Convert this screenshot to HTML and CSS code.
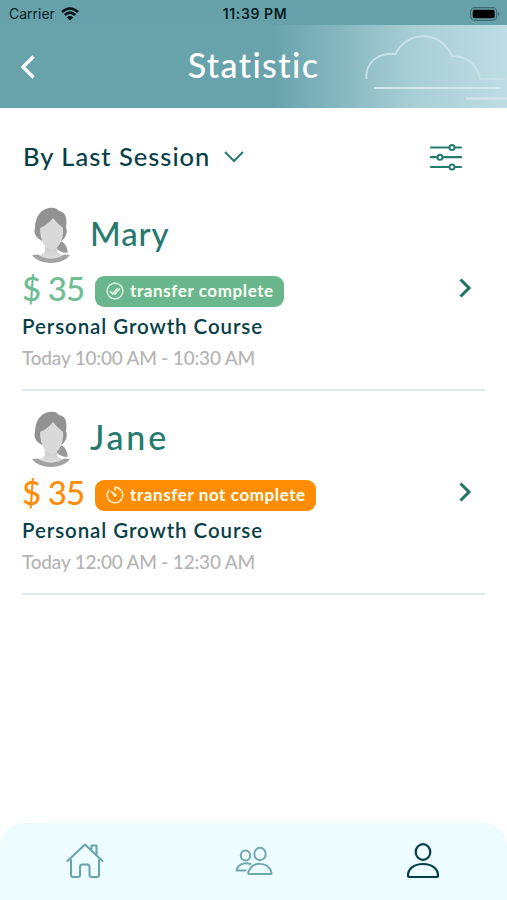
FILE: index.html
```html
<!DOCTYPE html>
<html lang="en">
<head>
<meta charset="utf-8">
<title>Statistic</title>
<link rel="stylesheet" href="styles.css">
</head>
<body>
<svg width="0" height="0" class="defs" aria-hidden="true">
  <defs>
    <linearGradient id="neck" x1="0" y1="0" x2="0" y2="1"><stop offset=".3" stop-color="#cdcdcd"/><stop offset="1" stop-color="#e0e0e0"/></linearGradient>
    <symbol id="avatar" viewBox="0 0 58 58">
      <path fill="#999" d="M37 34C42 34 46 40 45.500 46C40 46 34 43 34 39Z"/>
      <path fill="url(#neck)" d="M23 34H35V44C36 47 41 48 44 50C37 55 20 55 13 50C17 48 22 48 23 44Z"/>
      <path fill="#929292" d="M20 34C15 31 11 27 13 21C13 10 19 2 27 1C31 0 35 1 37 4C45 5 45 14 44 20C46 25 44 31 39 34L30 28Z"/>
      <path fill="#d9d9d9" d="M18 21C23 19 28 15 31 11C34 15 38 18 41 21C42 33 36 43 29.500 43C23 43 18 33 18 21Z"/>
      <path fill="#a3a3a3" d="M10 48L16 47.500C22 53 36 53 42 47.500L48 48C41 58.500 17 58.500 10 48Z"/>
    </symbol>
    <symbol id="next" viewBox="0 0 14 22"><path d="M2.500 2.500L11 11L2.500 19.500" fill="none" stroke="#247466" stroke-width="3"/></symbol>
  </defs>
</svg>
<div class="screen">
  <div class="status">
    <div class="carrier"><span>Carrier</span>
      <svg width="18" height="14" viewBox="0 0 18 14" fill="none" stroke="#061215" stroke-width="2.6"><path d="M1 5Q9-2 17 5M3.800 8Q9 3.400 14.200 8"/><path d="M9 13.500L5.700 10.200Q9 7.600 12.300 10.200Z" fill="#061215" stroke="none"/></svg>
    </div>
    <div class="clock">11:39 PM</div>
    <div class="battery">
      <svg width="31" height="14" viewBox="0 0 31 14"><rect x=".7" y=".7" width="26" height="12.6" rx="4" fill="none" stroke="#3c6a70" stroke-width="1.2"/><rect x="2.7" y="2.7" width="22" height="8.6" rx="2" fill="#000"/><path d="M28.200 4.800Q31 7 28.200 9.200Z" fill="#3c6a70"/></svg>
    </div>
  </div>
  <header class="header">
    <svg class="back" width="18" height="26" viewBox="0 0 18 26"><path d="M14.500 2.500L4 13L14.500 23.500" fill="none" stroke="#fff" stroke-width="3.4"/></svg>
    <h1 class="title">Statistic</h1>
    <svg class="cloud" width="147" height="82" viewBox="0 0 147 82" fill="none" stroke="#c7e2e7" stroke-width="2"><path d="M6.500 53C5 38 17 26 35.500 28C47 4 81 4 92 30C107 30 118 39 120 53H147"/><path d="M14 62H140M106 72.500H147" stroke="#d2e8ed"/></svg>
  </header>
  <main class="content">
    <div class="toolbar">
      <div class="sort"><span class="sort-text">By Last Session</span>
        <svg width="22" height="14" viewBox="0 0 22 14"><path d="M2 2L11 11L20 2" fill="none" stroke="#277b72" stroke-width="2"/></svg>
      </div>
      <svg class="filter" width="34" height="28" viewBox="0 0 34 28" stroke="#267b71" stroke-width="2.2" stroke-linecap="round"><path d="M2 4.500H32M2 14.200H32M2 24H32"/><g fill="#fff" stroke-width="2"><circle cx="23" cy="4.500" r="2.500"/><circle cx="11" cy="14.200" r="2.500"/><circle cx="23" cy="24" r="2.500"/></g></svg>
    </div>
    <article class="item">
      <div class="details">
        <div class="person"><svg class="avatar"><use href="#avatar"/></svg><h2 class="name mary">Mary</h2></div>
        <div class="payment done"><span class="price">$ 35</span>
          <span class="badge">
            <svg width="18" height="18" viewBox="0 0 18 18" fill="none" stroke="#ebfff4" stroke-width="1.3"><circle cx="9" cy="9" r="7.900"/><path d="M4 9.300L6.500 11.800L11.500 6.500M7.500 11L9 12L14 6.500" stroke-width="1.5"/></svg>
            <span class="badge-text">transfer complete</span>
          </span>
        </div>
        <p class="course">Personal Growth Course</p>
        <p class="time">Today 10:00 AM - 10:30 AM</p>
      </div>
      <svg class="next"><use href="#next"/></svg>
    </article>
    <article class="item">
      <div class="details">
        <div class="person"><svg class="avatar"><use href="#avatar"/></svg><h2 class="name jane">Jane</h2></div>
        <div class="payment pending"><span class="price">$ 35</span>
          <span class="badge">
            <svg width="18" height="18" viewBox="0 0 18 18" fill="none" stroke="#fff4d8" stroke-width="1.4"><path d="M9 5V1.200A7.800 7.800 0 1 1 3.200 3.700"/><path d="M4.800 5L10.500 9L9 10.800Z" fill="#fff4d8" stroke-width="1"/></svg>
            <span class="badge-text">transfer not complete</span>
          </span>
        </div>
        <p class="course">Personal Growth Course</p>
        <p class="time">Today 12:00 AM - 12:30 AM</p>
      </div>
      <svg class="next"><use href="#next"/></svg>
    </article>
  </main>
  <nav class="tabs">
    <div class="tab"><svg width="38" height="38" viewBox="0 0 38 38" fill="none" stroke="#68a4ab" stroke-width="2" stroke-linejoin="round" stroke-linecap="round"><path d="M1.500 19L19 2.500L36.500 19M5 18V33Q5 35 7 35H12Q14 35 14 33V25Q14 22.500 16.500 22.500H21Q23.500 22.500 23.500 25V33Q23.500 35 25.500 35H31Q33 35 33 33V18M25.500 7V3.500H30.500V13"/></svg></div>
    <div class="tab"><svg width="38" height="38" viewBox="0 0 38 38" fill="none" stroke="#70a8af" stroke-width="2" stroke-linejoin="round" stroke-linecap="round"><ellipse cx="10.500" cy="13.500" rx="4.700" ry="5"/><ellipse cx="25" cy="12" rx="5.700" ry="6.200"/><path d="M15.500 22C8.500 20 2.500 23 1.500 28.500H10.500M14 32C12.500 31.500 13.500 29 15 27C19 20 31.500 20 35.500 28C36.500 31 37.500 32 35.500 32Z"/></svg></div>
    <div class="tab"><svg width="38" height="38" viewBox="0 0 38 38" fill="none" stroke="#073f49" stroke-width="2.200" stroke-linejoin="round"><ellipse cx="19" cy="10" rx="7.300" ry="7.800"/><path d="M4 33.500C4 27 9.500 22 19 22S34 27 34 33.500Q34 35 32 35H6Q4 35 4 33.500Z"/></svg></div>
  </nav>
</div>
</body>
</html>
```

FILE: styles.css
```css
* { box-sizing: border-box; }
body { margin: 0; background: #fff; font-family: Lato, "Open Sans", sans-serif; }
h1, h2, p { margin: 0; white-space: nowrap; }
svg { display: block; flex: none; }
.defs { position: absolute; }
.screen { width: 507px; height: 900px; display: flex; flex-direction: column; }
.status { height: 25px; flex: none; padding: 2px 6px 0 9px; display: grid; grid-template-columns: 1fr auto 1fr; align-items: center; background: #67a2ab; color: #0b2024; font: 14px/20px Inter, sans-serif; }
.carrier { display: flex; align-items: center; gap: 6px; }
.clock { font-size: 14px; font-weight: 600; letter-spacing: .6px; }
.battery { justify-self: end; }
.header { height: 83px; flex: none; display: grid; grid-template-columns: 147px 1fr 147px; align-items: center; background: linear-gradient(90deg, #68a3ac 0 54%, #a9cfd5 82%, #bedce4); }
.back { margin-left: 18.5px; }
.title { justify-self: center; padding-bottom: 4px; color: #fff; font-size: 34px; line-height: 42px; font-weight: 500; letter-spacing: 1.4px; }
.content { flex: 1; padding: 0 22px; }
.toolbar { height: 79px; padding: 19px 22px 0 1px; display: flex; align-items: center; justify-content: space-between; }
.sort { display: flex; align-items: center; gap: 13px; }
.sort-text { padding-bottom: 2px; color: #073f49; font-size: 25.5px; line-height: 32px; font-weight: 500; letter-spacing: 1px; }
.item { height: 204px; border-bottom: 2px solid #dcebf0; padding-right: 13px; display: flex; align-items: center; justify-content: space-between; }
.details { align-self: flex-start; padding-top: 20px; }
.person { height: 58px; display: flex; align-items: center; gap: 10px; }
.avatar { width: 58px; height: 58px; }
.name { padding-bottom: 6px; color: #287a70; font-size: 33px; line-height: 40px; font-weight: 500; letter-spacing: .9px; }
.jane { font-size: 34px; letter-spacing: 2.8px; }
.payment { height: 32px; margin-top: 10px; display: flex; align-items: center; gap: 11px; }
.price { width: 62px; padding-bottom: 6px; font-size: 33px; line-height: 36px; font-weight: 500; letter-spacing: -.9px; white-space: nowrap; }
.badge { height: 31px; padding: 0 11px; border-radius: 9px; display: flex; align-items: center; gap: 6px; color: #f8fff4; font-size: 17px; line-height: 24px; font-weight: 700; letter-spacing: .6px; white-space: nowrap; }
.badge-text { padding-bottom: 1px; }
.done { color: #6fbd92; }
.done .badge { width: 189px; background: #6bb78d; }
.pending { color: #ff8c05; }
.pending .badge { width: 221px; background: #ff8c05; }
.course { margin-top: 6px; color: #073f49; font-size: 20.5px; line-height: 26px; font-weight: 600; letter-spacing: .92px; }
.time { margin-top: 6px; color: #b4b4b4; font-size: 19px; line-height: 26px; font-weight: 500; letter-spacing: -.2px; }
.next { width: 14px; height: 22px; }
.tabs { height: 77px; flex: none; display: grid; grid-template-columns: repeat(3, 1fr); justify-items: center; padding-top: 19px; border-radius: 24px 24px 0 0; background: #edfdff; }
```
